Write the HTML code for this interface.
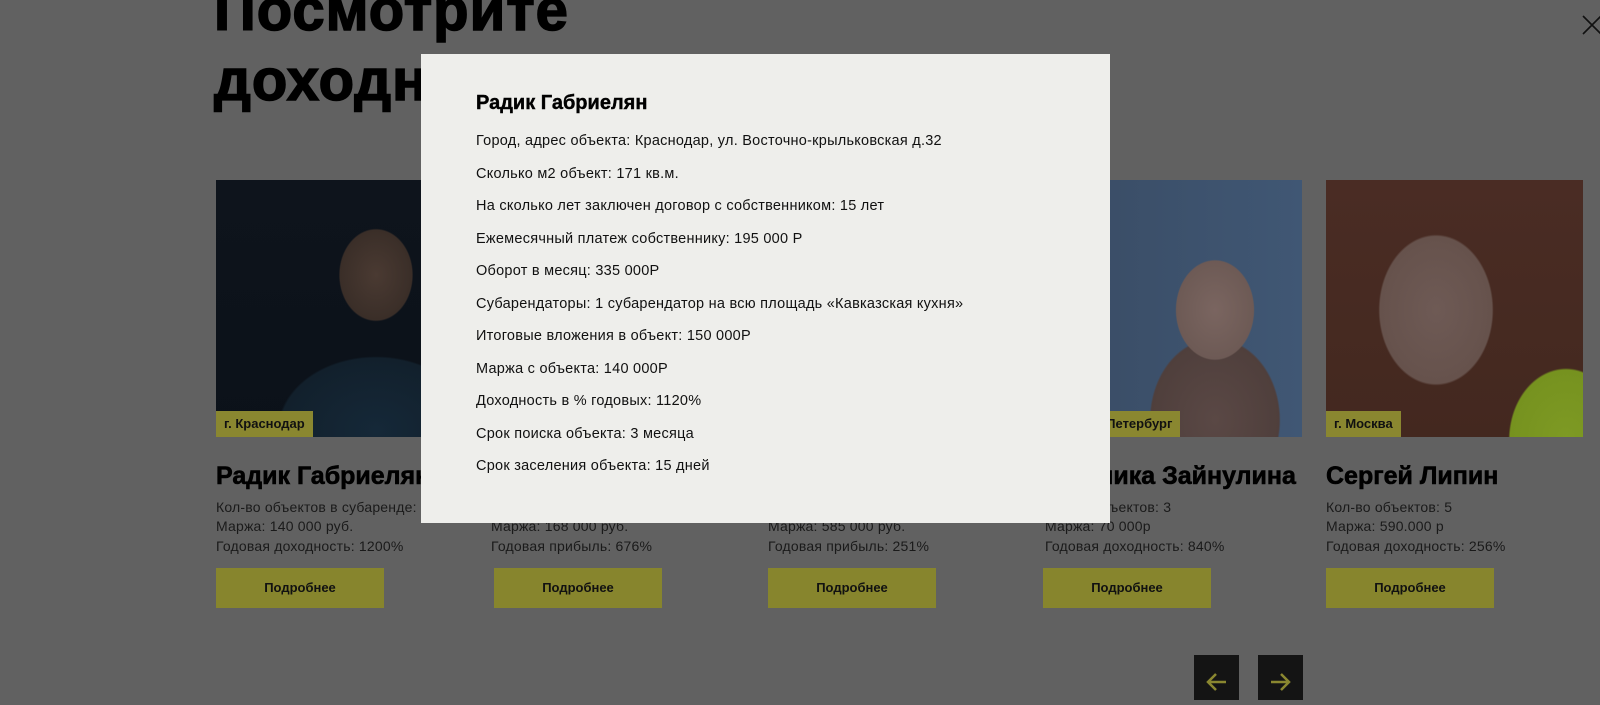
<!DOCTYPE html>
<html><head><meta charset="utf-8"><style>
*{margin:0;padding:0;box-sizing:border-box}
body{width:1600px;height:680px;overflow:hidden;background:#616161;font-family:"Liberation Sans",sans-serif;position:relative;color:#111}
.h{position:absolute;left:214px;font-size:58px;font-weight:bold;color:#000;letter-spacing:1px;line-height:70px;-webkit-text-stroke:1.5px #000}
.card{position:absolute;top:180px;width:257px}
.ph{height:257px;position:relative;overflow:hidden}
.tag{position:absolute;left:0;bottom:0;height:26px;padding:0 8px;background:#8a8730;font-size:13px;font-weight:bold;line-height:26px;color:#111}
.nm{position:absolute;top:282px;left:0;font-size:25px;font-weight:bold;white-space:nowrap;color:#000;-webkit-text-stroke:0.6px #000}
.st{position:absolute;top:318px;left:0;font-size:14px;line-height:19.3px;color:#1a1a1a;white-space:nowrap;letter-spacing:0.2px}
.btn{position:absolute;top:388px;left:0;width:168px;height:40px;background:#87852d;font-size:13px;font-weight:bold;text-align:center;line-height:40px;color:#111}
.modal{position:absolute;left:421px;top:54px;width:689px;height:469px;background:#eeeeeb}
.modal h2{position:absolute;left:55px;top:38px;font-size:20px;font-weight:bold;color:#000;-webkit-text-stroke:0.4px #000}
.modal p{position:absolute;left:55px;font-size:14.5px;letter-spacing:0.25px;color:#111;white-space:nowrap}
.nav{position:absolute;top:655px;width:45px;height:45px;background:#141414}
</style></head><body>
<div class="h" style="top:-24px">Посмотрите</div>
<div class="h" style="top:46px">доходность</div>

<div class="card" style="left:216px">
 <div class="ph" style="background:radial-gradient(ellipse 60px 75px at 160px 95px,#4a3a32 0,#3a2e28 60%,transparent 62%),radial-gradient(ellipse 120px 90px at 160px 250px,#152838 0,#12202c 80%,transparent 82%),linear-gradient(#0e141c,#0b1119)"><div class="tag">г. Краснодар</div></div>
 <div class="nm">Радик Габриелян</div>
 <div class="st">Кол-во объектов в субаренде: 2<br>Маржа: 140 000 руб.<br>Годовая доходность: 1200%</div>
 <div class="btn">Подробнее</div>
</div>
<div class="card" style="left:491px">
 <div class="ph" style="background:#333"></div>
 <div class="nm">Имя Фамилия</div>
 <div class="st">Кол-во объектов: 2<br>Маржа: 168 000 руб.<br>Годовая прибыль: 676%</div>
 <div class="btn" style="left:3px">Подробнее</div>
</div>
<div class="card" style="left:768px">
 <div class="ph" style="background:#333"></div>
 <div class="nm">Имя Фамилия</div>
 <div class="st">Кол-во объектов: 4<br>Маржа: 585 000 руб.<br>Годовая прибыль: 251%</div>
 <div class="btn">Подробнее</div>
</div>
<div class="card" style="left:1045px">
 <div class="ph" style="background:radial-gradient(ellipse 55px 70px at 170px 130px,#7a6560 0,#6d5a55 70%,transparent 72%),radial-gradient(ellipse 80px 100px at 170px 240px,#5a4845 0,#4f3f3c 80%,transparent 82%),linear-gradient(90deg,#5a5a58 0,#5a5a58 30px,#3a4d66 40px,#405774 100%)"><div class="tag">г. Санкт-Петербург</div></div>
 <div class="nm" style="left:-12px">Анжелика Зайнулина</div>
 <div class="st">Кол-во объектов: 3<br>Маржа: 70 000р<br>Годовая доходность: 840%</div>
 <div class="btn" style="left:-2px">Подробнее</div>
</div>
<div class="card" style="left:1326px">
 <div class="ph" style="background:radial-gradient(ellipse 80px 100px at 240px 260px,#7e9a24 0,#76921f 70%,transparent 72%),radial-gradient(ellipse 80px 105px at 110px 130px,#6e5a55 0,#66524c 70%,transparent 72%),linear-gradient(#4a2c24,#43281f)"><div class="tag">г. Москва</div></div>
 <div class="nm">Сергей Липин</div>
 <div class="st">Кол-во объектов: 5<br>Маржа: 590.000 р<br>Годовая доходность: 256%</div>
 <div class="btn">Подробнее</div>
</div>

<div class="nav" style="left:1194px"><svg width="45" height="45"><path d="M32 27H14M22 19l-8 8 8 8" stroke="#8a8730" stroke-width="2.5" fill="none"/></svg></div>
<div class="nav" style="left:1258px"><svg width="45" height="45"><path d="M13 27h18M23 19l8 8-8 8" stroke="#8a8730" stroke-width="2.5" fill="none"/></svg></div>

<svg style="position:absolute;left:1582px;top:15px" width="20" height="20"><path d="M1 1l18 18M19 1L1 19" stroke="#111" stroke-width="1.6"/></svg>

<div class="modal">
 <h2>Радик Габриелян</h2>
 <p style="top:79px">Город, адрес объекта: Краснодар, ул. Восточно-крыльковская д.32</p>
 <p style="top:112px">Сколько м2 объект: 171 кв.м.</p>
 <p style="top:144px">На сколько лет заключен договор с собственником: 15 лет</p>
 <p style="top:177px">Ежемесячный платеж собственнику: 195 000 Р</p>
 <p style="top:209px">Оборот в месяц: 335 000Р</p>
 <p style="top:242px">Субарендаторы: 1 субарендатор на всю площадь «Кавказская кухня»</p>
 <p style="top:274px">Итоговые вложения в объект: 150 000Р</p>
 <p style="top:307px">Маржа с объекта: 140 000Р</p>
 <p style="top:339px">Доходность в % годовых: 1120%</p>
 <p style="top:372px">Срок поиска объекта: 3 месяца</p>
 <p style="top:404px">Срок заселения объекта: 15 дней</p>
</div>
</body></html>
